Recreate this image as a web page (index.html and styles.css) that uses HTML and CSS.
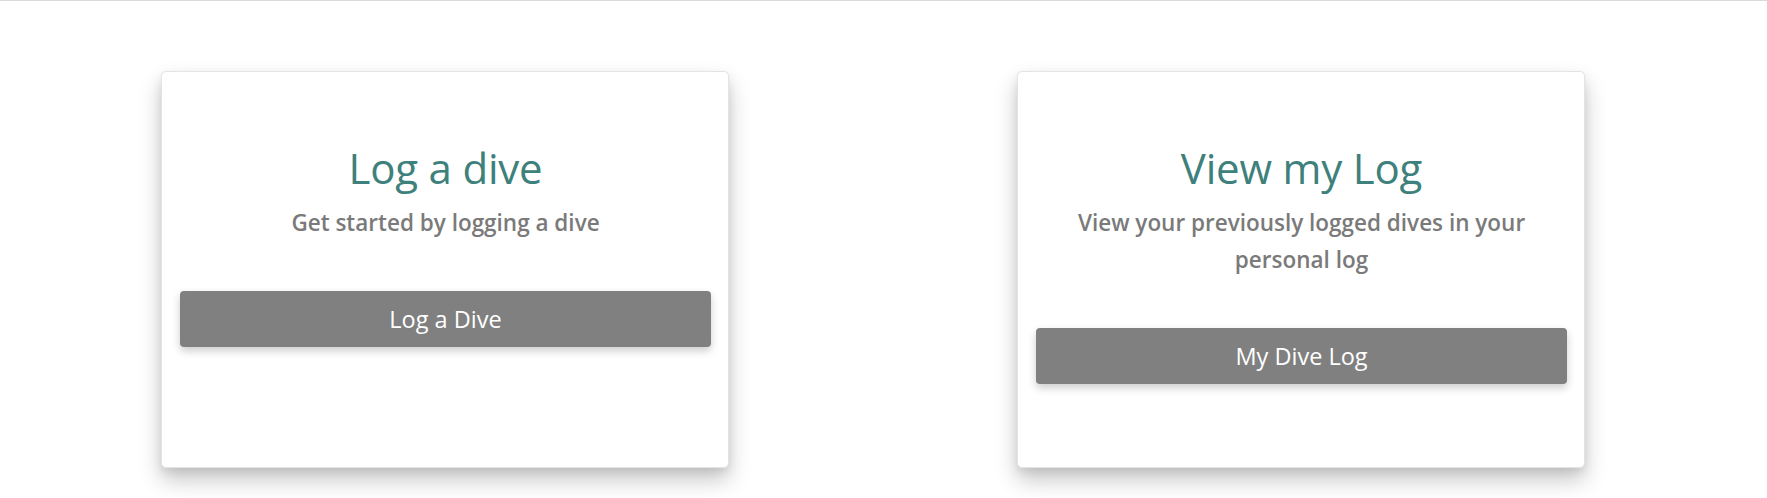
FILE: index.html
```html
<!DOCTYPE html>
<html lang="en">
<head>
<meta charset="utf-8">
<title>Dive Log</title>
<link rel="stylesheet" href="styles.css">
</head>
<body>
<header class="topbar"></header>
<main class="home">
  <section class="card">
    <h1 class="card-title">Log a dive</h1>
    <p class="card-text">Get started by logging a dive</p>
    <a class="btn" href="#">Log a Dive</a>
  </section>
  <section class="card">
    <h1 class="card-title">View my Log</h1>
    <p class="card-text">View your previously logged dives in your personal log</p>
    <a class="btn" href="#">My Dive Log</a>
  </section>
</main>
</body>
</html>
```
FILE: styles.css
```css
html, body {
  margin: 0;
  padding: 0;
  background: #ffffff;
}
body {
  font-family: "Open Sans", "Noto Sans", sans-serif;
  min-height: 498px;
}
.topbar {
  height: 0;
  border-bottom: 1px solid #dadada;
}
.home {
  display: flex;
  align-items: flex-start;
  gap: 288px;
  padding: 70px 0 40px 161px;
}
.card {
  box-sizing: border-box;
  width: 568px;
  height: 397px;
  border: 1px solid #e4e4e4;
  border-radius: 5px;
  background: #fff;
  box-shadow: 0 12px 22px rgba(0, 0, 0, 0.22), 0 4px 8px rgba(0, 0, 0, 0.08);
  padding: 69px 17px 0 18px;
  display: flex;
  flex-direction: column;
  text-align: center;
}
.card-title {
  margin: 0;
  font-size: 42px;
  line-height: 54px;
  font-weight: 500;
  color: #3e807b;
  letter-spacing: -0.2px;
}
.card-text {
  margin: 9px 0 0;
  padding: 0 30px;
  font-size: 22.5px;
  line-height: 37px;
  font-weight: 600;
  color: #7a7a7a;
}
.btn {
  display: block;
  margin-top: 50px;
  height: 56px;
  line-height: 56px;
  background: #808080;
  color: #ffffff;
  text-decoration: none;
  font-size: 23.5px;
  border-radius: 4px;
  box-shadow: 0 4px 8px rgba(0, 0, 0, 0.2);
}
```
